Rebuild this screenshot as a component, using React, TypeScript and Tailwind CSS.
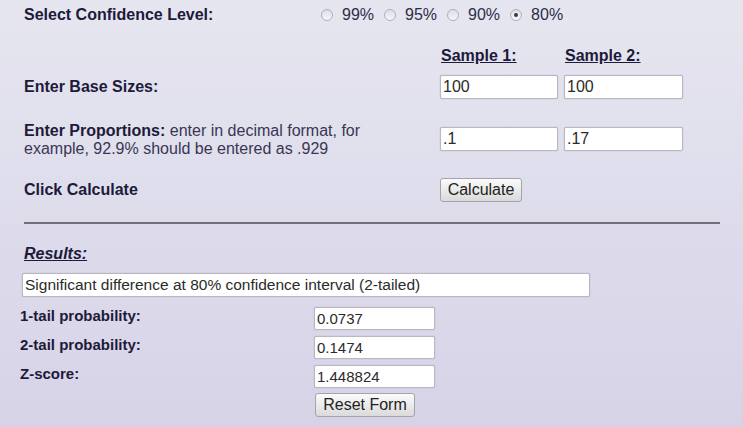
import React from "react"

const LEVELS = ["99%", "95%", "90%", "80%"]

function Radio({ label, checked }: { label: string; checked?: boolean }) {
  return (
    <label className="flex items-center">
      <span className="flex h-[12px] w-[12px] items-center justify-center rounded-full border border-[#b0afba] bg-gradient-to-b from-[#dedde4] to-[#f7f7f9]">
        {checked && <span className="h-[4px] w-[4px] rounded-full bg-[#3a3a3a]" />}
      </span>
      <span className="ml-[9px] mr-[10px] text-[16px] leading-[18px] text-[#2f2b4a]">{label}</span>
    </label>
  )
}

function Field({ value, className }: { value: string; className: string }) {
  return (
    <input
      defaultValue={value}
      className={
        "rounded-[2px] border border-[#b9b8c2] bg-white px-[2px] text-[#2b2b2b] shadow-[0_0_1px_#9c9ba6] outline-none " +
        className
      }
    />
  )
}

function Button({ children, className }: { children: React.ReactNode; className: string }) {
  return (
    <button
      type="button"
      className={
        "rounded-[3px] border border-[#a4a3ab] bg-gradient-to-b from-[#fbfbfb] to-[#dadada] text-[16px] leading-none text-[#222] " +
        className
      }
    >
      {children}
    </button>
  )
}

export default function App() {
  return (
    <div
      className="h-[427px] w-[743px] overflow-hidden bg-gradient-to-b from-[#e6e6f0] to-[#d6d3e7] pl-[24px] text-[#1d1a3a]"
      style={{ fontFamily: '"Liberation Sans", Arial, sans-serif' }}
    >
      <div className="flex h-[30px] items-center">
        <div className="w-[297px] text-[16px] font-bold leading-[18px]">Select Confidence Level:</div>
        {LEVELS.map((l) => (
          <Radio key={l} label={l} checked={l === "80%"} />
        ))}
      </div>

      <div className="mt-[17px] flex text-[16px] font-bold leading-[18px]">
        <div className="w-[416px]" />
        <div className="w-[118px] pl-[1px] underline">Sample 1:</div>
        <div className="ml-[6px] w-[119px] pl-[1px] underline">Sample 2:</div>
      </div>

      <div className="mt-[10px] flex h-[24px] items-center">
        <div className="w-[416px] text-[16px] font-bold leading-[18px]">Enter Base Sizes:</div>
        <Field value="100" className="h-[24px] w-[118px] text-[16px]" />
        <Field value="100" className="ml-[6px] h-[24px] w-[119px] text-[16px]" />
      </div>

      <div className="mt-[23px] flex items-start">
        <div className="w-[416px]">
          <p className="max-w-[360px] text-[16px] leading-[18px]">
            <span className="font-bold">Enter Proportions:</span>{" "}
            <span className="text-[#3a3654]">enter in decimal format, for example, 92.9% should be entered as .929</span>
          </p>
        </div>
        <Field value=".1" className="mt-[5px] h-[24px] w-[118px] text-[16px]" />
        <Field value=".17" className="ml-[6px] mt-[5px] h-[24px] w-[119px] text-[16px]" />
      </div>

      <div className="mt-[20px] flex h-[24px] items-center">
        <div className="w-[416px] text-[16px] font-bold leading-[18px]">Click Calculate</div>
        <Button className="h-[24px] w-[82px]">Calculate</Button>
      </div>

      <div className="mt-[20px] h-[2px] w-[696px] bg-[#707079]" />

      <div className="mt-[21px] text-[16px] font-bold italic leading-[18px] underline">Results:</div>

      <Field
        value="Significant difference at 80% confidence interval (2-tailed)"
        className="-ml-[2px] mt-[10px] h-[24px] w-[568px] text-[15.5px]"
      />

      <div className="-ml-[4px] mt-[10px] flex flex-col gap-[6px]">
        {[
          ["1-tail probability:", "0.0737"],
          ["2-tail probability:", "0.1474"],
          ["Z-score:", "1.448824"],
        ].map(([label, value]) => (
          <div key={label} className="flex items-start">
            <div className="w-[294px] text-[15px] font-bold leading-[18px]">{label}</div>
            <Field value={value} className="h-[23px] w-[121px] text-[15px]" />
          </div>
        ))}
      </div>

      <div className="-ml-[4px] mt-[5px] flex">
        <div className="w-[295px]" />
        <Button className="h-[24px] w-[100px]">Reset Form</Button>
      </div>
    </div>
  )
}
